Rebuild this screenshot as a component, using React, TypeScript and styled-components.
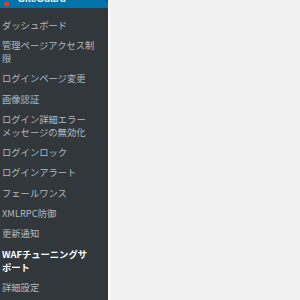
import styled, { createGlobalStyle } from 'styled-components';

const GlobalStyle = createGlobalStyle`
  html, body {
    margin: 0;
    padding: 0;
    background: #f1f1f1;
  }
  body {
    font-family: 'Noto Sans CJK JP', 'Noto Sans', sans-serif;
  }
`;

const Layout = styled.div`
  display: flex;
  width: 300px;
  height: 300px;
  overflow: hidden;
`;

const Sidebar = styled.nav`
  width: 108px;
  background: #32373c;
  display: flex;
  flex-direction: column;
  border-right: 2px solid #f9f9f9;
`;

const CurrentMenu = styled.div`
  height: 8px;
  background: #0073aa;
  border-top-right-radius: 3px;
  display: flex;
  align-items: flex-end;
  gap: 9px;
  padding-left: 4px;
  overflow: hidden;
`;

const MenuIcon = styled.span`
  width: 5px;
  height: 4px;
  margin-bottom: 2px;
  background: #e2401c;
  border-radius: 1px 1px 3px 3px;
`;

const MenuTitle = styled.span`
  font-family: 'Liberation Sans', sans-serif;
  font-size: 10px;
  line-height: 10px;
  font-weight: 600;
  color: #e8eef3;
  transform: translateY(-4px);
`;

const SubMenu = styled.ul`
  list-style: none;
  margin: 0;
  padding: 7px 0 0;
`;

const SubItem = styled.li<{ $current?: boolean }>`
  padding: 3.6px 2px;
  font-size: 9.3px;
  line-height: 13.1px;
  color: ${(p) => (p.$current ? '#ffffff' : '#b4b9be')};
  font-weight: ${(p) => (p.$current ? 700 : 400)};
  white-space: nowrap;
`;

const Line = styled.span`
  display: block;
`;

const Content = styled.main`
  flex: 1;
  background: #f1f1f1;
`;

const items = [
  ['ダッシュボード'],
  ['管理ページアクセス制', '限'],
  ['ログインページ変更'],
  ['画像認証'],
  ['ログイン詳細エラー', 'メッセージの無効化'],
  ['ログインロック'],
  ['ログインアラート'],
  ['フェールワンス'],
  ['XMLRPC防御'],
  ['更新通知'],
  ['WAFチューニングサ', 'ポート'],
  ['詳細設定'],
];

export default function App() {
  return (
    <>
      <GlobalStyle />
      <Layout>
        <Sidebar>
          <CurrentMenu>
            <MenuIcon />
            <MenuTitle>SiteGuard</MenuTitle>
          </CurrentMenu>
          <SubMenu>
            {items.map((lines) => (
              <SubItem key={lines[0]} $current={lines[0].startsWith('WAF')}>
                {lines.map((line) => (
                  <Line key={line}>{line}</Line>
                ))}
              </SubItem>
            ))}
          </SubMenu>
        </Sidebar>
        <Content />
      </Layout>
    </>
  );
}
